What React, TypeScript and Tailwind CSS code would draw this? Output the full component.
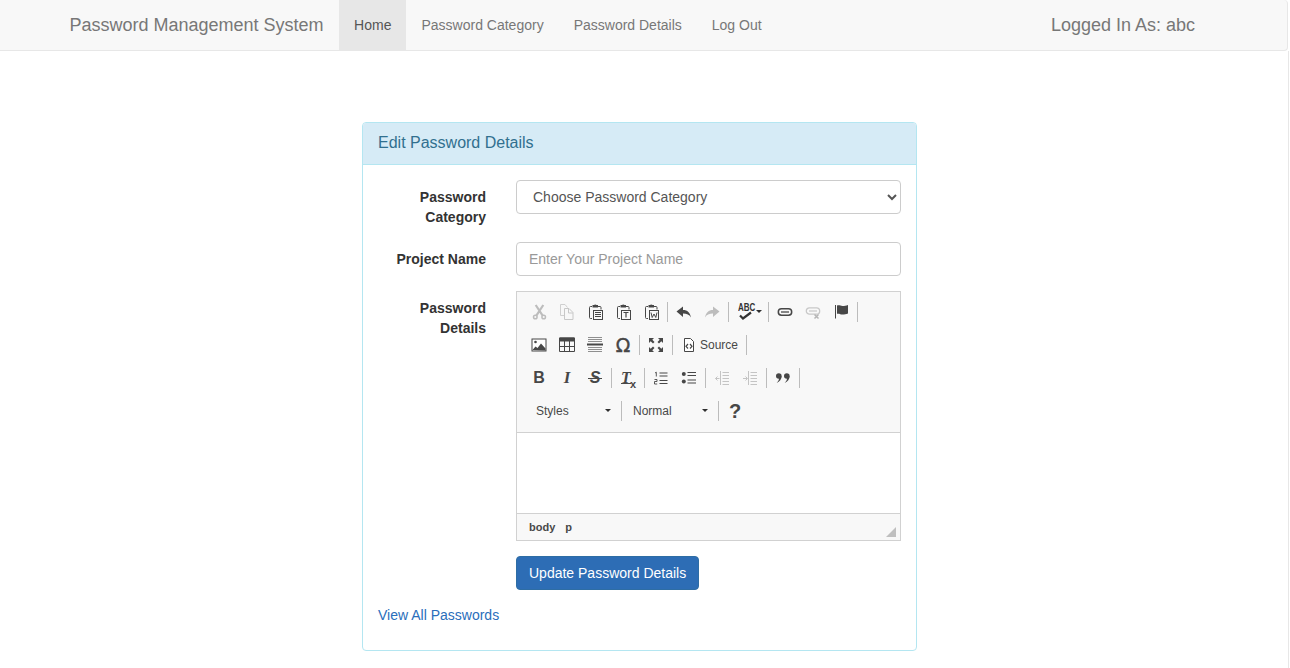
import React from "react";

const DARK = "#474747";
const GREY = "#bdbdbd";

function Svg({ children }: { children: React.ReactNode }) {
  return (
    <svg width="16" height="16" viewBox="0 0 16 16" className="block">
      {children}
    </svg>
  );
}

const icons: Record<string, React.ReactNode> = {
  cut: (
    <Svg>
      <g fill="none" stroke={GREY} strokeWidth="1.500">
        <circle cx="4.300" cy="13" r="1.800" />
        <circle cx="12.700" cy="13" r="1.800" />
        <path d="M5.500 11.400 12.300 1M11.500 11.400 4.700 1" strokeWidth="2.200" />
      </g>
    </Svg>
  ),
  copy: (
    <Svg>
      <path d="M5 11.500H1.500V0.500h4.500l2.500 3" fill="none" stroke="#d0d0d0" />
      <path d="M5.500 4.500h4.500l4 4v7H5.500z M9.500 4.500v4.500h4.500" fill="none" stroke="#c8c8c8" />
    </Svg>
  ),
  paste: <Paste kind="lines" />,
  pasteT: <Paste kind="T" />,
  pasteW: <Paste kind="W" />,
  undo: (
    <Svg>
      <path d="M0.500 7.500 7 2.500V6c4.500 0 7 2.500 8 7.500-1.800-2.800-4-3.900-8-3.900v3.400z" fill={DARK} />
    </Svg>
  ),
  redo: (
    <Svg>
      <path d="M15.500 7.500 9 2.500V6c-4.500 0-7 2.500-8 7.500 1.800-2.800 4-3.900 8-3.900v3.400z" fill={GREY} />
    </Svg>
  ),
  link: (
    <Svg>
      <rect x="1.300" y="4.800" width="13.400" height="6.400" rx="3.200" fill="none" stroke={DARK} strokeWidth="1.500" />
      <path d="M4 8h8" stroke={DARK} strokeWidth="1.300" />
    </Svg>
  ),
  unlink: (
    <Svg>
      <rect x="1.300" y="3.800" width="13.400" height="6.400" rx="3.200" fill="none" stroke="#c8c8c8" strokeWidth="1.300" />
      <path d="M4 7h8" stroke="#c8c8c8" strokeWidth="1.200" />
      <path d="M9.500 10.500l4 4M13.500 10.500l-4 4" stroke="#b5b5b5" strokeWidth="1.500" />
    </Svg>
  ),
  flag: (
    <Svg>
      <path d="M2.500 1v13.500" stroke={DARK} strokeWidth="1" />
      <path d="M4 1.500c2.500-.6 3.500.5 5.500.5 2 0 3.500-.3 5.500-1v8.500c-2 .7-3.500 1-5.500 1-2 0-3-1-5.500-.7z" fill={DARK} />
    </Svg>
  ),
  image: (
    <Svg>
      <rect x="1" y="2" width="14" height="12" fill="#fff" stroke={DARK} />
      <circle cx="4.500" cy="5" r="1.300" fill={DARK} />
      <path d="M1.500 13l3-3.500 2 1.500 3.500-4.500 4.500 5v2z" fill={DARK} />
    </Svg>
  ),
  table: (
    <Svg>
      <rect x="0.500" y="0.500" width="15" height="4" fill={DARK} />
      <path d="M0.500 1h15v13.500H0.500zM0.500 9.500h15M5.500 4v10.500M10.500 4v10.500" fill="none" stroke={DARK} />
    </Svg>
  ),
  hr: (
    <Svg>
      <path d="M1 0.500h14M1 2.500h14M1 4.500h14M1 10.500h14M1 12.500h14M1 14.500h14" stroke="#8f8f8f" />
      <path d="M0 7.500h16" stroke={DARK} strokeWidth="2" />
    </Svg>
  ),
  maximize: (
    <Svg>
      <path d="M1 1h5L4.300 2.700 6.500 5 5 6.500 2.700 4.300 1 6zM15 1v5l-1.700-1.700L11 6.500 9.500 5l2.200-2.300L10 1zM1 15v-5l1.700 1.700L5 9.500 6.500 11l-2.200 2.300L6 15zM15 15h-5l1.700-1.700L9.500 11 11 9.500l2.300 2.200L15 10z" fill={DARK} />
    </Svg>
  ),
  source: (
    <Svg>
      <path d="M3.500 1.500h6l3 3v10h-9z" fill="#fff" stroke={DARK} />
      <path d="M7 7 5 9.300l2 2.200M9 7l2 2.300-2 2.200" fill="none" stroke={DARK} strokeWidth="1.200" />
    </Svg>
  ),
  ol: (
    <Svg>
      <path d="M6.500 3h8M6.500 6h8M6.500 10.500h8M6.500 13.500h8" stroke={DARK} strokeWidth="1" />
      <path d="M2 3l1.300-.8v4.300M1.500 9.500h2.500v2H1.500v2.500h2.700" fill="none" stroke={DARK} strokeWidth="0.900" />
    </Svg>
  ),
  ul: (
    <Svg>
      <circle cx="2.800" cy="4" r="2" fill={DARK} />
      <circle cx="2.800" cy="11.500" r="2" fill={DARK} />
      <path d="M6.500 2.500h8.500M6.500 5.500h8.500M6.500 10h8.500M6.500 13h8.500" stroke={DARK} strokeWidth="1.200" />
    </Svg>
  ),
  outdent: <Indent />,
  indent: <Indent flip />,
  quote: (
    <Svg>
      <circle cx="3.800" cy="6" r="2.800" fill={DARK} />
      <path d="M6.600 6c0 3.300-1.800 5.500-5 7 1.600-1.500 2.400-3 2.400-5z" fill={DARK} />
      <circle cx="11.800" cy="6" r="2.800" fill={DARK} />
      <path d="M14.600 6c0 3.300-1.800 5.500-5 7 1.600-1.500 2.400-3 2.400-5z" fill={DARK} />
    </Svg>
  ),
};

function Paste({ kind }: { kind: "lines" | "T" | "W" }) {
  return (
    <Svg>
      <path d="M5 2.500H3.500q-1 0-1 1v10q0 1 1 1H5M11 2.500h2q1 0 1 1v2" fill="none" stroke={DARK} strokeWidth="1" />
      <path d="M5.500 1h1.500c.3-.8 2.200-.8 2.500 0h1.500V3.500H5.500z" fill={DARK} />
      <rect x="6.500" y="6.500" width="9" height="9" fill="#f8f8f8" stroke={DARK} />
      {kind === "lines" && <path d="M8 8.500h6M8 10.500h6M8 12.500h6" stroke={DARK} />}
      {kind === "T" && <path d="M8.500 8.500h5M11 8.500v5" stroke={DARK} strokeWidth="1.200" fill="none" />}
      {kind === "W" && <path d="M8 8.500l1.200 5 1.800-3.500 1.800 3.500 1.200-5" stroke={DARK} fill="none" />}
    </Svg>
  );
}

function Indent({ flip }: { flip?: boolean }) {
  return (
    <Svg>
      <g stroke="#c4c4c4">
        <path d="M8.500 2.500h6.500M8.500 5.500h6.500M8.500 8.500h6.500M8.500 11.500h6.500M8.500 14.500h6.500" />
        <path d="M6.500 1v14" />
        {flip ? <path d="M1 8.500h4M3.500 6.500l2 2-2 2" fill="none" /> : <path d="M1.500 8.500h4M3.500 6.500l-2 2 2 2" fill="none" />}
      </g>
    </Svg>
  );
}

function Btn({ name }: { name: string }) {
  return <span className="flex h-[28px] w-[28px] items-center justify-center">{icons[name]}</span>;
}

function Sep() {
  return <span className="mx-[2px] h-[20px] w-px bg-[#bcbcbc]" />;
}

function GlyphBtn({ children, className }: { children: React.ReactNode; className: string }) {
  return <span className={"flex h-[28px] w-[28px] items-center justify-center text-[#474747] " + className}>{children}</span>;
}

function Caret({ className = "" }: { className?: string }) {
  return <span className={"h-0 w-0 border-x-[3px] border-t-[3px] border-x-transparent border-t-[#2f2f2f] " + className} />;
}

function Row({ children }: { children: React.ReactNode }) {
  return <div className="flex h-[33px] items-center">{children}</div>;
}

function Toolbar() {
  return (
    <div className="border-b border-[#d1d1d1] bg-[#f8f8f8] pl-[8px] pt-[3px] pb-[5px]">
      <Row>
        <Btn name="cut" />
        <Btn name="copy" />
        <Btn name="paste" />
        <Btn name="pasteT" />
        <Btn name="pasteW" />
        <Sep />
        <Btn name="undo" />
        <Btn name="redo" />
        <Sep />
        <span className="flex h-[28px] w-[35px] items-center pl-[6px]">
          <span className="relative block h-[16px] w-[18px]">
            <span className="absolute left-[1px] top-[-1px] origin-top-left scale-x-[0.8] text-[10px] font-bold leading-[10px] text-[#333]">ABC</span>
            <svg width="18" height="16" viewBox="0 0 18 16" className="absolute left-0 top-0 block">
              <path d="M3 11.500l3 3L14 8.500" fill="none" stroke="#333" strokeWidth="2.200" />
            </svg>
          </span>
          <Caret className="ml-[1px]" />
        </span>
        <Sep />
        <Btn name="link" />
        <Btn name="unlink" />
        <Btn name="flag" />
        <Sep />
      </Row>
      <Row>
        <Btn name="image" />
        <Btn name="table" />
        <Btn name="hr" />
        <GlyphBtn className="font-['DejaVu_Sans'] text-[19px] [-webkit-text-stroke:0.4px_#474747]">Ω</GlyphBtn>
        <Sep />
        <Btn name="maximize" />
        <Sep />
        <span className="flex h-[28px] items-center pl-[6px] pr-[6px]">
          {icons.source}
          <span className="ml-[3px] text-[12px] text-[#484848]">Source</span>
        </span>
        <Sep />
      </Row>
      <Row>
        <GlyphBtn className="text-[16px] font-bold">B</GlyphBtn>
        <GlyphBtn className="font-['Liberation_Serif'] text-[17px] font-bold italic">I</GlyphBtn>
        <GlyphBtn className="text-[16px] font-bold italic">
          <span className="relative">
            S<span className="absolute left-[-2px] right-[-2px] top-[10px] h-[1.500px] bg-[#474747]" />
          </span>
        </GlyphBtn>
        <Sep />
        <GlyphBtn className="font-['Liberation_Serif'] text-[16px] font-bold italic">
          <span className="relative mr-[4px]">
            T
            <span className="absolute left-0 top-[15px] h-px w-[10px] bg-[#474747]" />
            <span className="absolute left-[9px] top-[6px] font-['Liberation_Sans'] text-[11px] not-italic">x</span>
          </span>
        </GlyphBtn>
        <Sep />
        <Btn name="ol" />
        <Btn name="ul" />
        <Sep />
        <Btn name="outdent" />
        <Btn name="indent" />
        <Sep />
        <Btn name="quote" />
        <Sep />
      </Row>
      <Row>
        <span className="flex h-[28px] w-[94px] items-center pl-[11px] pr-[8px] text-[12px] text-[#484848]">
          <span className="flex-1">Styles</span>
          <Caret />
        </span>
        <Sep />
        <span className="flex h-[28px] w-[92px] items-center pl-[9px] pr-[8px] text-[12px] text-[#484848]">
          <span className="flex-1">Normal</span>
          <Caret />
        </span>
        <Sep />
        <GlyphBtn className="text-[20px] font-bold">?</GlyphBtn>
      </Row>
    </div>
  );
}

export default function App() {
  return (
    <div className="relative h-[668px] overflow-hidden bg-white font-['Liberation_Sans',Arial,sans-serif] text-[14px] leading-[20px] text-[#333]">
      <nav className="flex h-[51px] w-[1288px] items-stretch rounded-r-[4px] border-b border-r border-[#e7e7e7] bg-[#f8f8f8] pl-[69.500px]">
        <span className="flex items-center pr-[15.500px] text-[18px] text-[#777]">Password Management System</span>
        <a className="flex items-center bg-[#e7e7e7] px-[15px] text-[#555]">Home</a>
        <a className="flex items-center px-[15px] text-[#777]">Password Category</a>
        <a className="flex items-center px-[15px] text-[#777]">Password Details</a>
        <a className="flex items-center px-[15px] text-[#777]">Log Out</a>
        <span className="ml-auto flex items-center pr-[92px] text-[18px] text-[#777]">Logged In As: abc</span>
      </nav>

      <main className="ml-[362px] mt-[71px] w-[555px] rounded-[4px] border border-[#b4e6f1] bg-white">
        <div className="flex h-[42px] items-center rounded-t-[3px] border-b border-[#b4e6f1] bg-[#d6ebf6] px-[15px] pb-[2px] text-[16px] text-[#31708f]">
          Edit Password Details
        </div>
        <div className="px-[15px] pt-[15px] pb-[25px]">
          <div className="mb-[15px] flex">
            <label className="w-[108px] pt-[7px] text-right font-bold leading-[20px]">Password Category</label>
            <div className="ml-[30px] w-[385px]">
              <select className="h-[34px] w-full rounded-[4px] border border-[#ccc] bg-white px-[12px] text-[14px] text-[#555]">
                <option>Choose Password Category</option>
              </select>
            </div>
          </div>
          <div className="mb-[15px] flex">
            <label className="w-[108px] pt-[7px] text-right font-bold">Project Name</label>
            <input
              className="ml-[30px] h-[34px] w-[385px] rounded-[4px] border border-[#ccc] bg-white px-[12px] text-[14px] text-[#555] placeholder:text-[#999]"
              placeholder="Enter Your Project Name"
            />
          </div>
          <div className="mb-[15px] flex">
            <label className="w-[108px] pt-[7px] text-right font-bold">Password Details</label>
            <div className="ml-[30px] w-[385px] border border-[#d1d1d1]">
              <Toolbar />
              <div className="h-[80px] bg-white" />
              <div className="relative flex h-[27px] items-center border-t border-[#d1d1d1] bg-[#f8f8f8] pl-[12px] text-[11px] font-bold text-[#484848]">
                <span>body</span>
                <span className="ml-[10px]">p</span>
                <span className="absolute bottom-[3px] right-[4px] h-0 w-0 border-b-[10px] border-l-[10px] border-b-[#bfbfbf] border-l-transparent" />
              </div>
            </div>
          </div>
          <div className="pl-[138px]">
            <button className="h-[34px] rounded-[4px] border border-[#2e6da4] bg-[#2d6db5] px-[12px] text-[14px] text-white">
              Update Password Details
            </button>
          </div>
          <a className="mt-[15px] block text-[#2a6ebb]">View All Passwords</a>
        </div>
      </main>
      <div className="absolute bottom-0 right-[1px] top-[51px] w-px bg-[#e7e7e7]" />
    </div>
  );
}
